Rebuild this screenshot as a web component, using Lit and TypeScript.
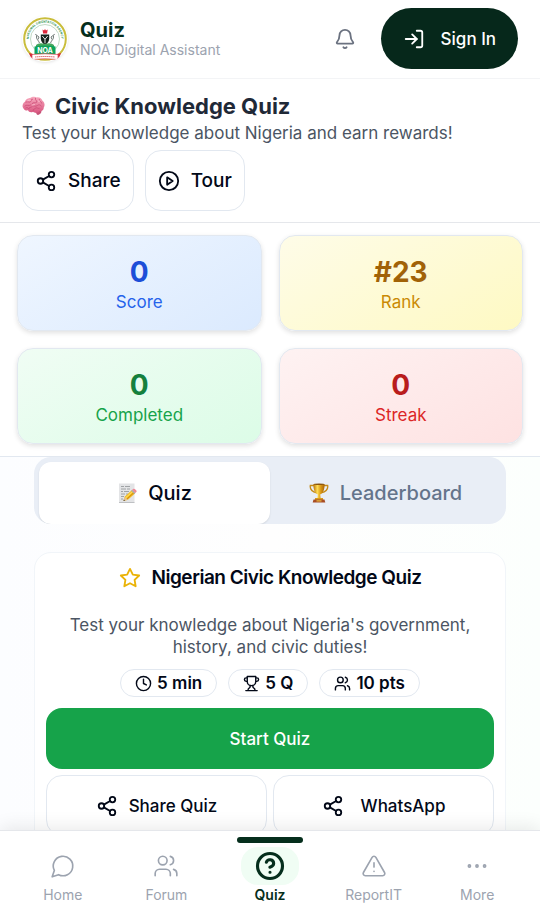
import { LitElement, html, svg, css } from "lit";
import { customElement, property, state } from "lit/decorators.js";
import { classMap } from "lit/directives/class-map.js";

const icons: Record<string, unknown> = {
  bell: svg`<path d="M10.268 21a2 2 0 0 0 3.464 0"/><path d="M3.262 15.326A1 1 0 0 0 4 17h16a1 1 0 0 0 .74-1.673C19.41 13.956 18 12.499 18 8A6 6 0 0 0 6 8c0 4.499-1.411 5.956-2.738 7.326"/>`,
  login: svg`<path d="M15 3h4a2 2 0 0 1 2 2v14a2 2 0 0 1-2 2h-4"/><path d="m10 17 5-5-5-5"/><path d="M15 12H3"/>`,
  share: svg`<circle cx="18" cy="5" r="3"/><circle cx="6" cy="12" r="3"/><circle cx="18" cy="19" r="3"/><path d="m8.59 13.51 6.83 3.98M15.41 6.51l-6.82 3.98"/>`,
  play: svg`<circle cx="12" cy="12" r="10"/><path d="m10 8 6 4-6 4z"/>`,
  star: svg`<path d="M12 2l3.09 6.26L22 9.27l-5 4.87 1.18 6.88L12 17.77l-6.18 3.25L7 14.14 2 9.27l6.91-1.01z"/>`,
  clock: svg`<circle cx="12" cy="12" r="10"/><path d="M12 6v6l4 2"/>`,
  trophy: svg`<path d="M6 9H4.5a2.5 2.5 0 0 1 0-5H6M18 9h1.5a2.5 2.5 0 0 0 0-5H18M4 22h16M10 14.66V17c0 .55-.47.98-.97 1.21C7.85 18.75 7 20.24 7 22M14 14.66V17c0 .55.47.98.97 1.21C16.15 18.75 17 20.24 17 22M18 2H6v7a6 6 0 0 0 12 0V2Z"/>`,
  users: svg`<path d="M16 21v-2a4 4 0 0 0-4-4H6a4 4 0 0 0-4 4v2"/><circle cx="9" cy="7" r="4"/><path d="M22 21v-2a4 4 0 0 0-3-3.87M16 3.13a4 4 0 0 1 0 7.75"/>`,
  chat: svg`<path d="M7.9 20A9 9 0 1 0 4 16.1L2 22Z"/>`,
  help: svg`<circle cx="12" cy="12" r="10"/><path d="M9.09 9a3 3 0 0 1 5.83 1c0 2-3 3-3 3M12 17h.01"/>`,
  alert: svg`<path d="m21.73 18-8-14a2 2 0 0 0-3.48 0l-8 14A2 2 0 0 0 4 21h16a2 2 0 0 0 1.73-3M12 9v4M12 17h.01"/>`,
  more: svg`<circle cx="12" cy="12" r="1"/><circle cx="19" cy="12" r="1"/><circle cx="5" cy="12" r="1"/>`,
};

@customElement("app-icon")
class AppIcon extends LitElement {
  @property() name = "";
  static styles = css`
    :host { display: inline-flex; flex: none; width: 22px; height: 22px; }
    svg { width: 100%; height: 100%; fill: none; stroke: currentColor; stroke-width: var(--stroke, 2); stroke-linecap: round; stroke-linejoin: round; }
  `;
  render() {
    return html`<svg viewBox="0 0 24 24" aria-hidden="true">${icons[this.name]}</svg>`;
  }
}

const logo = html`<svg class="logo" viewBox="0 0 46 46" role="img" aria-label="National Orientation Agency">
  <defs><path id="arc" d="M7.500 28A16.300 16.300 0 1 1 38.500 28"/></defs>
  <circle cx="23" cy="23" r="20.800" fill="#fff" stroke="#c9bd3b" stroke-width="2"/>
  <circle cx="23" cy="23" r="14.500" fill="#fff" stroke="#a5c9ac" stroke-width=".7"/>
  <text class="seal"><textPath href="#arc" startOffset="50%">NATIONAL ORIENTATION AGENCY</textPath></text>
  <path d="M20.500 13.500l1.500 1 1-1.500 1 1.500 1.700-1-.6 4h-4z" fill="#e0283c"/>
  <path d="M18.800 18.500h8.400v4c0 3-1.800 5-4.200 6.300-2.400-1.300-4.200-3.300-4.200-6.300z" fill="#17231d"/>
  <path d="M20.300 20l2.700 3.300 2.700-3.300M23 23.300v4" fill="none" stroke="#fff" stroke-width=".9"/>
  <path d="M17.500 27c-1-3-3.500-3.500-3-7 .3-1.800-1-2-1.200-1M28.500 27c1-3 3.500-3.500 3-7-.3-1.800 1-2 1.200-1M15 19.500l2 1.500-1 2.500M31 19.500l-2 1.500 1 2.500" fill="none" stroke="#737c79" stroke-width="1"/>
  <path d="M14 29q3-3 9-1 6-2 9 1v2H14z" fill="#47a65e"/>
  <path d="M12.500 30.500q10.500-2 21 0v8h-21z" fill="#0ba45a"/>
  <text class="noa" x="23" y="37">NOA</text>
  <path d="M7 37l4 1v6l-4 1 1.500-4zM39 37l-4 1v6l4 1-1.500-4z" fill="#d52b3d"/>
  <path d="M10 38.500q13-1.500 26 0v5q-13-1.500-26 0z" fill="#fff" stroke="#db4450" stroke-width=".7"/>
  <path d="M13 41q10-1 20 0" fill="none" stroke="#dd5863" stroke-dasharray="1.500 .5"/>
</svg>`;

const brain = html`<svg class="emoji-brain" viewBox="0 0 24 20" aria-hidden="true">
  <defs><linearGradient id="bg" x1="0" y1="0" x2="0" y2="1"><stop offset="0" stop-color="#f8a9be"/><stop offset="1" stop-color="#d95680"/></linearGradient></defs>
  <path d="M15 15l5-.5c1 2-1 4.500-3.500 5-1.500-.3-2-2-1.500-4.500z" fill="#c65377"/>
  <path d="M2 13C-.5 11 .7 7 3 5.500 4 2.500 7 2 8.500 1.700 10.500-.2 14 0 15.500 1c3-.4 5 1.200 5.700 3.200C24 6 24 10 22.700 11.500c.2 2.500-2 4.500-4.700 4-1.500 2.500-5 1.800-6.500.5-2 1.300-4.700.3-5.200-1.500-1.600.5-3.600-.2-4.300-1.500z" fill="url(#bg)"/>
  <path d="M4 6c2-1.500 3.500 1 5-.5S8.500 2.500 11 3M14 2c-1 2 2 2 1.500 4-2 1.500-3.500-.5-5 1.500M18 3c-1 2 2 1.500 2.500 4M3 10c2-2 4 .5 6-1M7 13c-.5-2 3-1 4-3 2-.5 3 1 5-.5s3-.5 4 .5M11.500 15c-.5-2 2-1.500 3-3 1.500-.5 2 1 3.500.5M4 12c1-.8 2-.5 2.500.5" fill="none" stroke="#c94c76" stroke-width=".8" stroke-linecap="round"/>
  <path d="M6 4.500c1-.7 2-.7 2.700-.5M17 5c.7-.6 1.300-.3 1.800.2M11 9l2-.4" fill="none" stroke="#ffd1dc" stroke-width=".8" stroke-linecap="round"/>
</svg>`;

const memo = html`<svg class="emoji" viewBox="0 0 20 20" aria-hidden="true">
  <path d="M2 .5h15.500v19H2z" fill="#e3e4e6"/><path d="M2 19.500h15.500" stroke="#bec0c3"/>
  <path d="M4 3.500h3m1 0h5M4 6h5m1 0h3M4 8.500h2m1 0h5M4 11h4m1 0h2M4 13.500h3M4 16h2" stroke="#8f9296" stroke-width=".8"/>
  <path d="M6.500 18l1.200-4.200L15 7l3.200 3.200-7.300 6.600z" fill="#f2b91d"/>
  <path d="M8.700 14.900L16 8.100" stroke="#ffdc55" stroke-width="1.200"/>
  <path d="M9.900 16L17.200 9.300" stroke="#cf8b14"/>
  <path d="M6.500 18l1.200-4.200 3.200 3z" fill="#e6c291"/><path d="M6.500 18l.4-1.600 1.200 1.100z" fill="#333"/>
  <path d="M14.200 7.700l1-.9 3.200 3.200-1 1z" fill="#a5adb4"/><path d="M15.200 6.800l1.200-1c1-.8 3.900 1.700 3.100 3L18.400 10z" fill="#ed8998"/>
</svg>`;

const cup = html`<svg class="emoji" viewBox="0 0 20 20" aria-hidden="true">
  <defs><linearGradient id="cg"><stop offset="0" stop-color="#b97409"/><stop offset=".35" stop-color="#ffdd55"/><stop offset=".65" stop-color="#dc9b16"/><stop offset="1" stop-color="#a86308"/></linearGradient></defs>
  <path d="M5.500 2.500H1.300c-.5 3 1.500 6 6.500 7.500M14.500 2.500h4.200c.5 3-1.500 6-6.500 7.500" fill="none" stroke="#c58a18" stroke-width="1.300"/>
  <path d="M4.500 1h11c.3 5-1 9-4.300 10.500L11.700 16H8.300l.5-4.500C5.500 10 4.200 6 4.500 1z" fill="url(#cg)"/>
  <ellipse cx="10" cy="1.200" rx="5.500" ry=".8" fill="#8b560d"/>
  <path d="M6 15h8v2H6z" fill="#d99a1c"/><path d="M4.500 16.500h11l.8 3H3.700z" fill="#a84d24"/><path d="M7.500 17.300h5v1.300h-5z" fill="#e8b83c"/>
</svg>`;

const stats = [
  { value: "0", label: "Score", tone: "blue" },
  { value: "#23", label: "Rank", tone: "yellow" },
  { value: "0", label: "Completed", tone: "green" },
  { value: "0", label: "Streak", tone: "red" },
];

const links = [
  { icon: "chat", label: "Home" },
  { icon: "users", label: "Forum" },
  { icon: "help", label: "Quiz" },
  { icon: "alert", label: "ReportIT" },
  { icon: "more", label: "More" },
];

@customElement("app-root")
class AppRoot extends LitElement {
  @state() tab = "quiz";

  static styles = css`
    :host { display: flex; flex-direction: column; height: 100vh; overflow: hidden; background: #fff; color: #020817; font-family: Inter, "Liberation Sans", sans-serif; font-size: 17px; line-height: 22px; }
    * { box-sizing: border-box; }
    h1, h2, p { margin: 0; }
    button { font: inherit; color: inherit; margin: 0; padding: 0; border: 0; background: none; cursor: pointer; display: flex; align-items: center; justify-content: center; }
    a { color: inherit; text-decoration: none; }
    .top { flex: none; display: flex; align-items: center; padding: 8px 22px 9px; border-bottom: 1px solid #f3f4f6; }
    .logo { width: 46px; height: 46px; margin-right: 12px; border-radius: 50%; box-shadow: 0 1px 3px #0000001a; }
    .seal { font-size: 3px; font-weight: 700; fill: #2c9350; text-anchor: middle; }
    .noa { font-size: 7px; font-weight: 700; fill: #fff; text-anchor: middle; }
    .brand { flex: 1; }
    .brand h1 { font-size: 20px; line-height: 22px; font-weight: 700; color: #052e1c; }
    .brand p { font-size: 14px; line-height: 18px; color: #9ca3af; }
    .bell { width: 44px; height: 44px; color: #6b7280; margin-right: 14px; }
    .signin { height: 61px; padding: 0 22px; gap: 16px; border-radius: 31px; background: #06281b; color: #fff; font-weight: 500; }
    .scroll { flex: 1; min-height: 0; overflow: auto; scrollbar-width: none; background: linear-gradient(90deg, #fcfdff, #fefefe 50%, #fcfffd); }
    .intro { background: #fff; padding: 15px 22px 11px; border-bottom: 1px solid #e5e7eb; }
    .intro h2 { display: flex; align-items: center; gap: 10px; font-size: 22px; line-height: 24px; font-weight: 700; color: #1f2937; }
    .intro p { color: #4b5563; margin: 4px 0 6px; }
    .emoji-brain { width: 23px; height: 20px; }
    .emoji { width: 20px; height: 20px; }
    .actions { display: flex; gap: 11px; }
    .outline { height: 61px; padding: 0 12px; gap: 11px; border: 1px solid #e2e8f0; border-radius: 16px; background: #fff; font-weight: 500; }
    .actions .outline { font-size: 19px; }
    .stats { display: grid; grid-template-columns: 1fr 1fr; gap: 17px; padding: 12px 17px; background: #fff; border-bottom: 1px solid #e2e8f0; }
    .stat { height: 96px; padding-top: 3px; display: flex; flex-direction: column; justify-content: center; align-items: center; border: 1px solid #e2e8f0; border-radius: 16px; box-shadow: 0 2px 5px #0000001f; }
    .stat strong { font-size: 28px; line-height: 34px; font-weight: 700; }
    .stat span { line-height: 26px; }
    .blue { background: linear-gradient(150deg, #eff6ff, #dbeafe); color: #2563eb; }
    .blue strong { color: #1d4ed8; }
    .yellow { background: linear-gradient(150deg, #fefce8, #fef9c3); color: #ca8a04; }
    .yellow strong { color: #a16207; }
    .green { background: linear-gradient(150deg, #f0fdf4, #dcfce7); color: #16a34a; }
    .green strong { color: #15803d; }
    .red { background: linear-gradient(150deg, #fef2f2, #fee2e2); color: #dc2626; }
    .red strong { color: #b91c1c; }
    .content { padding: 0 34px 24px; }
    .tabs { display: grid; grid-template-columns: 1fr 1fr; height: 67px; padding: 5px 5px 0; border-radius: 17px; background: #e9eef6; overflow: hidden; }
    .tab { gap: 11px; font-size: 20px; font-weight: 500; color: #64748b; border-radius: 12px; }
    .tab.on { background: #fff; color: #020817; box-shadow: 0 1px 2px #0000001a; }
    .card { margin-top: 28px; padding: 11px 11px 22px; border: 1px solid #f1f5f9; border-radius: 17px; background: #fff; display: flex; flex-direction: column; text-align: center; }
    .card h2 { display: flex; align-items: center; justify-content: center; gap: 11px; font-size: 19px; line-height: 28px; font-weight: 600; letter-spacing: -0.025em; }
    .star { color: #eab308; }
    .desc { margin: 22px 16px 11px; color: #4b5563; }
    .pills { display: flex; justify-content: center; gap: 11px; margin-bottom: 11px; }
    .pill { display: flex; align-items: center; gap: 5px; height: 28px; padding: 0 14px; border: 1px solid #e2e8f0; border-radius: 14px; font-weight: 600; }
    .pill app-icon { width: 17px; height: 17px; }
    .start { height: 61px; border-radius: 16px; background: #16a34a; color: #fff; font-weight: 500; }
    .pair { display: grid; grid-template-columns: 1fr 1fr; gap: 6px; margin-top: 6px; }
    .pair .wide { gap: 17px; }
    .nav { flex: none; display: grid; grid-template-columns: repeat(5, 1fr); height: 90px; padding: 0 11px; border-top: 1px solid #e5e7eb; background: #fff; box-shadow: 0 -4px 16px #00000014; position: relative; }
    .link { display: flex; flex-direction: column; align-items: center; color: #9ca3af; font-size: 14px; line-height: 20px; }
    .link::before { content: ""; width: 66px; height: 6px; margin: 6px 0 4px; border-radius: 3px; }
    .ring { display: flex; align-items: center; justify-content: center; width: 58px; height: 38px; border-radius: 17px; --stroke: 1.5; }
    .ring app-icon { width: 26px; height: 26px; }
    .link.on { color: #052e1c; font-weight: 600; }
    .link.on::before { background: #052e1c; }
    .link.on .ring { background: #f0fdf4; --stroke: 2.5; }
    .link.on app-icon { width: 30px; height: 30px; }
  `;

  render() {
    return html`
      <header class="top">
        ${logo}
        <div class="brand"><h1>Quiz</h1><p>NOA Digital Assistant</p></div>
        <button class="bell" aria-label="Notifications"><app-icon name="bell"></app-icon></button>
        <button class="signin"><app-icon name="login"></app-icon>Sign In</button>
      </header>
      <main class="scroll">
        <section class="intro">
          <h2>${brain}Civic Knowledge Quiz</h2>
          <p>Test your knowledge about Nigeria and earn rewards!</p>
          <div class="actions">
            <button class="outline"><app-icon name="share"></app-icon>Share</button>
            <button class="outline"><app-icon name="play"></app-icon>Tour</button>
          </div>
        </section>
        <section class="stats">
          ${stats.map((s) => html`<div class="stat ${s.tone}"><strong>${s.value}</strong><span>${s.label}</span></div>`)}
        </section>
        <div class="content">
          <div class="tabs" role="tablist">
            ${this.renderTab("quiz", memo, "Quiz")}
            ${this.renderTab("leaderboard", cup, "Leaderboard")}
          </div>
          <section class="card">
            <h2><app-icon class="star" name="star"></app-icon>Nigerian Civic Knowledge Quiz</h2>
            <p class="desc">Test your knowledge about Nigeria's government, history, and civic duties!</p>
            <div class="pills">
              <span class="pill"><app-icon name="clock"></app-icon>5 min</span>
              <span class="pill"><app-icon name="trophy"></app-icon>5 Q</span>
              <span class="pill"><app-icon name="users"></app-icon>10 pts</span>
            </div>
            <button class="start">Start Quiz</button>
            <div class="pair">
              <button class="outline"><app-icon name="share"></app-icon>Share Quiz</button>
              <button class="outline wide"><app-icon name="share"></app-icon>WhatsApp</button>
            </div>
          </section>
        </div>
      </main>
      <nav class="nav">
        ${links.map((l) => html`<a href="#${l.label.toLowerCase()}" class=${classMap({ link: true, on: l.label === "Quiz" })}>
          <span class="ring"><app-icon name=${l.icon}></app-icon></span>${l.label}</a>`)}
      </nav>`;
  }

  renderTab(id: string, icon: unknown, label: string) {
    const on = this.tab === id;
    return html`<button role="tab" aria-selected=${on ? "true" : "false"} class=${classMap({ tab: true, on })} @click=${() => (this.tab = id)}>${icon}${label}</button>`;
  }
}
